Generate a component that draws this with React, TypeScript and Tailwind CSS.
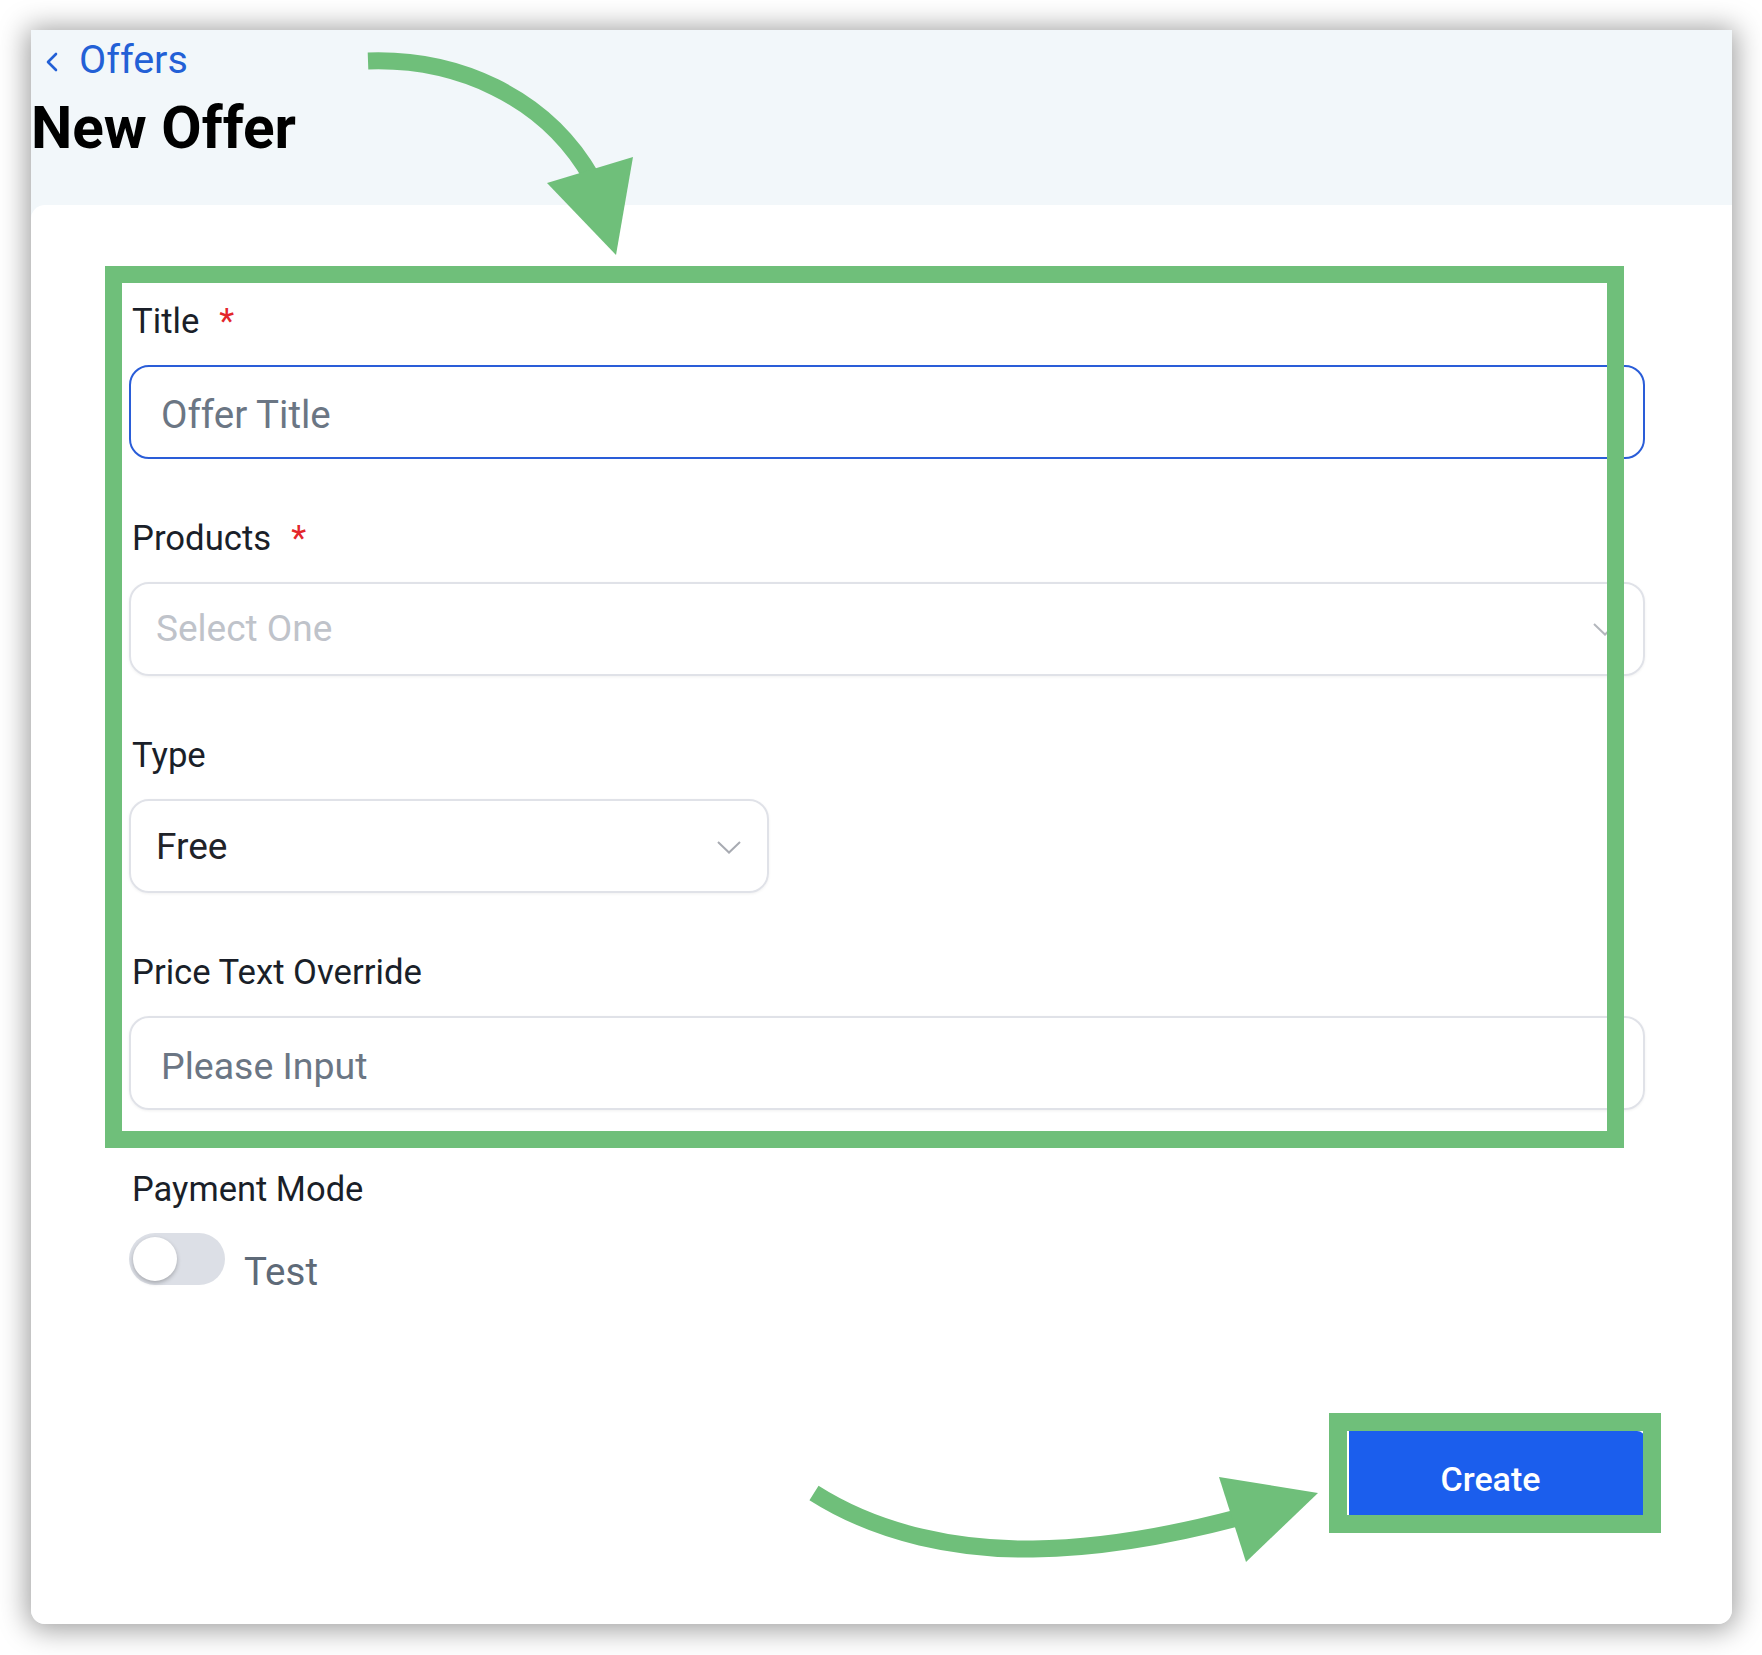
export default function App() {
  return (
    <div className="relative w-[1762px] h-[1655px] bg-white overflow-hidden font-[family-name:Roboto,'Liberation_Sans',sans-serif]">
      <div className="ml-[31px] mt-[30px] w-[1701px] h-[1594px] flex flex-col bg-[#f2f7fa] rounded-b-[14px] shadow-[0_2px_28px_4px_rgba(0,0,0,0.38)]">
        <header className="h-[175px] shrink-0 pt-[8px]">
          <div className="flex items-center h-[44px] pl-[14px] text-[39.5px] leading-[44px] text-[#2360d6]">
            <svg width="14" height="20" viewBox="0 0 14 20" className="mt-[4px]">
              <polyline points="11,2 3,10 11,18" fill="none" stroke="#2360d6" strokeWidth="2.6" strokeLinecap="round" strokeLinejoin="round" />
            </svg>
            <span className="ml-[20px]">Offers</span>
          </div>
          <h1 className="mt-[13px] text-[58.5px] leading-[66px] font-bold text-black">New Offer</h1>
        </header>

        <main className="flex-1 flex flex-col bg-white rounded-tl-[14px] rounded-b-[14px] pt-[96px] pl-[98px] pr-[87px] pb-[109px]">
          <div>
            <label className="block h-[40px] pl-[3px] text-[34.7px] leading-[40px] text-[#1a1f29]">
              Title<span className="ml-[20px] text-[#e3262b]">*</span>
            </label>
            <div className="mt-[24px] h-[94px] rounded-[20px] border-2 border-[#2a5dd8] flex items-center pl-[30px] pt-[6px] text-[38.5px] text-[#6b7684]">
              Offer Title
            </div>
          </div>

          <div className="mt-[59px]">
            <label className="block h-[40px] pl-[3px] text-[34.7px] leading-[40px] text-[#1a1f29]">
              Products<span className="ml-[20px] text-[#e3262b]">*</span>
            </label>
            <div className="mt-[24px] h-[94px] rounded-[20px] border-2 border-[#e0e2e8] shadow-[0_1px_3px_rgba(0,0,0,0.06)] flex items-center justify-between pl-[25px] pr-[26px] text-[37px] text-[#bfc3ca]">
              <span>Select One</span>
              <svg width="24" height="13" viewBox="0 0 24 13">
                <polyline points="1,1 12,11.5 23,1" fill="none" stroke="#b4b7bd" strokeWidth="2" />
              </svg>
            </div>
          </div>

          <div className="mt-[59px]">
            <label className="block h-[40px] pl-[3px] text-[34.7px] leading-[40px] text-[#1a1f29]">Type</label>
            <div className="mt-[24px] w-[640px] h-[94px] rounded-[20px] border-2 border-[#e0e2e8] shadow-[0_1px_3px_rgba(0,0,0,0.06)] flex items-center justify-between pl-[25px] pr-[26px] pt-[2px] text-[37px] text-[#1f2329]">
              <span>Free</span>
              <svg width="24" height="13" viewBox="0 0 24 13">
                <polyline points="1,1 12,11.5 23,1" fill="none" stroke="#a8abb2" strokeWidth="2" />
              </svg>
            </div>
          </div>

          <div className="mt-[59px]">
            <label className="block h-[40px] pl-[3px] text-[34.7px] leading-[40px] text-[#1a1f29]">Price Text Override</label>
            <div className="mt-[24px] h-[94px] rounded-[20px] border-2 border-[#e0e2e8] shadow-[0_1px_3px_rgba(0,0,0,0.06)] flex items-center pl-[30px] pt-[6px] text-[37.5px] text-[#6b7684]">
              Please Input
            </div>
          </div>

          <div className="mt-[59px]">
            <label className="block h-[40px] pl-[3px] text-[34.5px] leading-[40px] text-[#1a1f29]">Payment Mode</label>
            <div className="mt-[24px] flex items-start">
              <div className="relative w-[96px] h-[52px] rounded-full bg-[#dcdfe6]">
                <div className="absolute left-[4px] top-[4px] w-[44px] h-[44px] rounded-full bg-white shadow-[0_2px_4px_rgba(0,0,0,0.25)]" />
              </div>
              <span className="ml-[19px] mt-[17px] text-[38.5px] leading-[44px] text-[#5e6a78]">Test</span>
            </div>
          </div>

          <div className="mt-[137px] flex justify-end">
            <button className="w-[296px] h-[84px] bg-[#1b5eed] rounded-tr-[8px] text-white text-[34px] font-medium flex items-center justify-center pt-[13px] pr-[13px]">
              Create
            </button>
          </div>
        </main>
      </div>

      {/* annotation overlays */}
      <div className="absolute left-[105px] top-[266px] w-[1519px] h-[882px] border-[17px] border-[#6fbf7a] pointer-events-none" />
      <div className="absolute left-[1329px] top-[1413px] w-[332px] h-[120px] border-[18px] border-[#6fbf7a] pointer-events-none" />
      <svg className="absolute left-0 top-0 pointer-events-none" width="1762" height="1655" viewBox="0 0 1762 1655">
        <path d="M 368 61 C 455 58, 545 95, 592 178" fill="none" stroke="#6fbf7a" strokeWidth="17" />
        <polygon points="547,183 633,157 616,255" fill="#6fbf7a" />
        <path d="M 814 1493 C 880 1535, 960 1550, 1033 1549 C 1110 1548, 1180 1533, 1237 1518" fill="none" stroke="#6fbf7a" strokeWidth="17" />
        <polygon points="1219,1477 1318,1493 1246,1562" fill="#6fbf7a" />
      </svg>
    </div>
  );
}
